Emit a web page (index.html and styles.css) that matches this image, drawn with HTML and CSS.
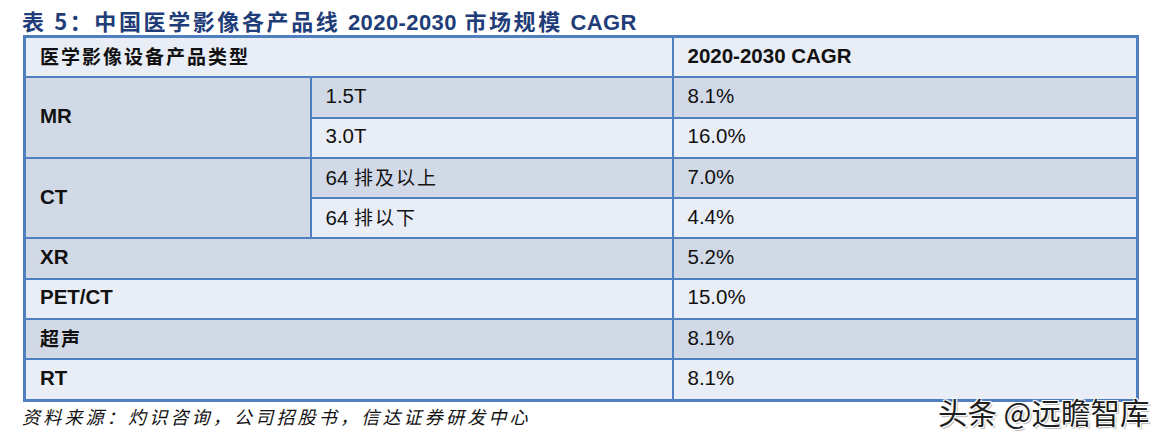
FILE: index.html
```html
<!DOCTYPE html>
<html lang="zh">
<head>
<meta charset="utf-8">
<title>表 5</title>
<link rel="stylesheet" href="styles.css">
</head>
<body>
<div class="page">
  <h1 class="title">表 5：中国医学影像各产品线 <span class="num">2020-2030</span> 市场规模 <span class="num">CAGR</span></h1>
  <table class="data">
    <colgroup>
      <col class="c1"><col class="c2"><col class="c3">
    </colgroup>
    <tr class="light">
      <th colspan="2" class="zh">医学影像设备产品类型</th>
      <th>2020-2030 CAGR</th>
    </tr>
    <tr class="dark">
      <th rowspan="2" class="dark">MR</th>
      <td>1.5T</td>
      <td>8.1%</td>
    </tr>
    <tr class="light">
      <td>3.0T</td>
      <td>16.0%</td>
    </tr>
    <tr class="dark">
      <th rowspan="2" class="dark">CT</th>
      <td>64 <span class="zh">排及以上</span></td>
      <td>7.0%</td>
    </tr>
    <tr class="light">
      <td>64 <span class="zh">排以下</span></td>
      <td>4.4%</td>
    </tr>
    <tr class="dark">
      <th colspan="2">XR</th>
      <td>5.2%</td>
    </tr>
    <tr class="light">
      <th colspan="2">PET/CT</th>
      <td>15.0%</td>
    </tr>
    <tr class="dark">
      <th colspan="2" class="zh">超声</th>
      <td>8.1%</td>
    </tr>
    <tr class="light">
      <th colspan="2">RT</th>
      <td>8.1%</td>
    </tr>
  </table>
  <p class="source">资料来源：灼识咨询，公司招股书，信达证券研发中心</p>
  <div class="watermark">头条 @远瞻智库</div>
</div>
</body>
</html>
```

FILE: styles.css
```css
html, body {
  margin: 0;
  padding: 0;
  background: #ffffff;
}
.page {
  position: relative;
  width: 1167px;
  height: 435px;
  padding: 6px 0 0 22px;
  box-sizing: border-box;
  overflow: hidden;
}
.title {
  margin: 0;
  height: 29px;
  font-family: "Noto Sans CJK SC", "Liberation Sans", sans-serif;
  font-weight: bold;
  font-size: 22px;
  line-height: 29px;
  letter-spacing: 2.6px;
  color: #1f3d78;
  white-space: nowrap;
}
.title .num {
  font-family: "Liberation Sans", sans-serif;
  letter-spacing: 0.4px;
}
.data {
  margin-left: 1px;
  border-collapse: collapse;
  table-layout: fixed;
  width: 1113px;
  border: 3px solid #4f7fbf;
  font-family: "Liberation Sans", "Noto Sans CJK SC", sans-serif;
  font-size: 20.5px;
  color: #111111;
}
.c1 { width: 286px; }
.c2 { width: 362px; }
.c3 { width: 465px; }
.data th, .data td {
  border: 2px solid #4f7fbf;
  height: 35.3px;
  padding: 0 0 3px 14px;
  text-align: left;
  vertical-align: middle;
  white-space: nowrap;
}
.data th {
  font-weight: bold;
}
.light th, .light td { background: #e9edf5; }
.dark th, .dark td, th.dark { background: #d1d9e7; }
.zh {
  font-family: "Noto Sans CJK SC", sans-serif;
  font-size: 19px;
  letter-spacing: 2px;
}
td .zh {
  font-weight: normal;
}
.source {
  margin: 0;
  font-family: "Noto Sans CJK SC", sans-serif;
  font-style: italic;
  font-size: 18px;
  letter-spacing: 3.2px;
  line-height: 28px;
  color: #111111;
  white-space: nowrap;
}
.watermark {
  position: absolute;
  left: 938px;
  top: 392px;
  font-family: "Noto Sans CJK SC", sans-serif;
  font-size: 29.5px;
  line-height: 38px;
  color: #1e1e1e;
  white-space: nowrap;
  text-shadow: 1px 1px 0 #fff, -1px -1px 0 #fff, 1px -1px 0 #fff, -1px 1px 0 #fff, 2px 2px 1px #bbb;
}
```
